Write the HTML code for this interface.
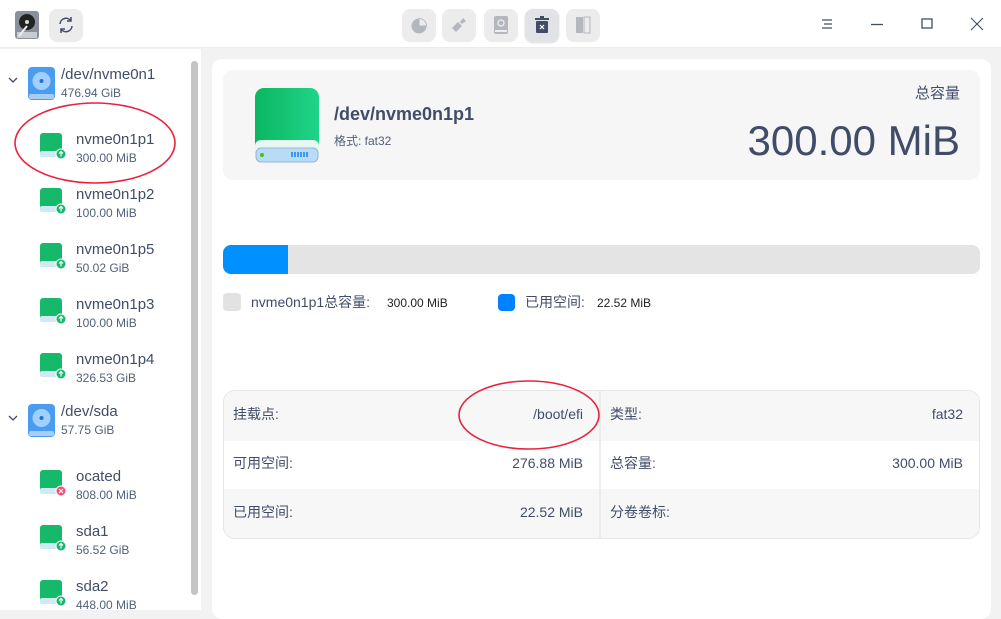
<!DOCTYPE html>
<html><head><meta charset="utf-8"><style>
*{margin:0;padding:0;box-sizing:border-box}
body{width:1001px;height:610px;overflow:hidden;background:#f2f2f2;font-family:"Liberation Sans","Noto Sans CJK SC",sans-serif;color:#414d68;position:relative;line-height:1.2}
.abs{position:absolute}
.top{left:0;top:0;width:1001px;height:48px;background:#fff;border-bottom:1px solid #ececec}
.tb{position:absolute;top:9px;width:34px;height:33px;border-radius:8px;background:#ececec}
.side{left:0;top:49px;width:201px;height:561px;background:#fff}
.sb{left:191px;top:61px;width:7px;height:534px;border-radius:4px;background:#c4c4c4}
.main{left:212px;top:59px;width:779px;height:560px;background:#fff;border-radius:10px}
.n{font-size:15px;color:#414d68;line-height:18px}
.s{font-size:12px;color:#526079;line-height:14px}
.card{left:223px;top:70px;width:757px;height:110px;background:#f6f6f6;border-radius:10px}
.tbl{left:223px;top:390px;width:757px;height:149px;border:1px solid #e6e6e6;border-radius:12px;overflow:hidden;background:#fff}
.row{position:absolute;left:0;width:757px;height:50px;font-size:14px}
.row span{position:absolute;top:14px;line-height:18px}
</style></head><body>
<div class="abs top"></div>
<svg class="abs" style="left:14px;top:10px" width="26" height="30" viewBox="0 0 26 30"><rect x="1" y="1" width="24" height="28" rx="3" fill="#8a9099"/><circle cx="13" cy="12" r="8" fill="#222"/><circle cx="13" cy="12" r="2" fill="#ddd"/><rect x="3" y="22" width="20" height="6" fill="#c8ccd2"/><path d="M5 26 L13 16" stroke="#eee" stroke-width="2"/></svg>
<div class="tb" style="left:49px"></div>
<svg class="abs" style="left:56px;top:15px" width="20" height="20" viewBox="0 0 20 20" fill="none" stroke="#414d68" stroke-width="1.5"><path d="M4 9a6 6 0 0 1 11-3M16 11a6 6 0 0 1-11 3"/><path d="M15 2v4h-4M5 18v-4h4"/></svg>
<div class="tb" style="left:402px"></div>
<svg class="abs" style="left:410px;top:17px" width="18" height="18"><circle cx="9" cy="9" r="7.5" fill="#b3b7be"/><path d="M9 1.5V9h7.5A7.5 7.5 0 0 0 9 1.5z" fill="#ececec" stroke="#b3b7be"/></svg>
<div class="tb" style="left:442px"></div>
<svg class="abs" style="left:450px;top:16px" width="18" height="18"><path d="M2 12l6-6 4 4-6 6z" fill="#b3b7be"/><path d="M10 6l3-4 3 3-4 3z" fill="#b3b7be"/></svg>
<div class="tb" style="left:484px"></div>
<svg class="abs" style="left:493px;top:15px" width="16" height="20"><rect x="1" y="1" width="14" height="18" rx="2" fill="#b3b7be"/><circle cx="8" cy="8" r="3" fill="none" stroke="#eee" stroke-width="1.3"/><rect x="2" y="15" width="12" height="2" fill="#eee"/></svg>
<div class="tb" style="left:525px;background:#e2e3e6;box-shadow:0 1px 2px rgba(0,0,0,.15)"></div>
<svg class="abs" style="left:534px;top:15px" width="16" height="20"><rect x="1" y="3" width="14" height="2" fill="#414d68"/><rect x="6" y="1" width="4" height="3" fill="#414d68"/><rect x="2" y="6" width="12" height="12" rx="1" fill="#414d68"/><path d="M6 10l4 4M10 10l-4 4" stroke="#fff" stroke-width="1.2"/></svg>
<div class="tb" style="left:566px"></div>
<svg class="abs" style="left:575px;top:15px" width="16" height="20"><rect x="1" y="2" width="7" height="16" fill="#b3b7be"/><rect x="9" y="2" width="6" height="16" fill="none" stroke="#b3b7be"/></svg>
<svg class="abs" style="left:820px;top:17px" width="14" height="14" stroke="#414d68" stroke-width="1.2"><path d="M2 3h10M4 7h8M2 11h10"/></svg>
<svg class="abs" style="left:870px;top:17px" width="14" height="14" stroke="#414d68" stroke-width="1.3"><path d="M1 7.5h12"/></svg>
<svg class="abs" style="left:921px;top:18px" width="12" height="12" stroke="#414d68" stroke-width="1.3" fill="none"><rect x="1" y="1" width="10" height="9"/></svg>
<svg class="abs" style="left:970px;top:17px" width="14" height="14" stroke="#414d68" stroke-width="1.1"><path d="M1 1l12 12M13 1L1 13"/></svg>

<div class="abs side"></div>
<div class="abs sb"></div>
<div class="abs main"></div>

<svg class="abs" style="left:8px;top:76px" width="10" height="8" stroke="#414d68" stroke-width="1.3" fill="none"><path d="M1 2l4 4 4-4"/></svg>
<svg class="abs" style="left:28px;top:67px" width="27" height="33"><rect x="0" y="0" width="27" height="33" rx="4" fill="#4a9cf0"/><circle cx="13.5" cy="14" r="9" fill="#9fd0ff"/><circle cx="13.5" cy="14" r="2" fill="#2770c4"/><rect x="1" y="27" width="25" height="5" rx="2" fill="#aaccf3"/></svg>
<div class="abs n" style="left:61px;top:66px">/dev/nvme0n1</div>
<div class="abs s" style="left:61px;top:86px">476.94 GiB</div>
<svg class="abs" style="left:8px;top:414px" width="10" height="8" stroke="#414d68" stroke-width="1.3" fill="none"><path d="M1 2l4 4 4-4"/></svg>
<svg class="abs" style="left:28px;top:404px" width="27" height="33"><rect x="0" y="0" width="27" height="33" rx="4" fill="#4a9cf0"/><circle cx="13.5" cy="14" r="9" fill="#9fd0ff"/><circle cx="13.5" cy="14" r="2" fill="#2770c4"/><rect x="1" y="27" width="25" height="5" rx="2" fill="#aaccf3"/></svg>
<div class="abs n" style="left:61px;top:403px">/dev/sda</div>
<div class="abs s" style="left:61px;top:423px">57.75 GiB</div>

<svg width="0" height="0" style="position:absolute"><defs>
<g id="pg"><rect x="0" y="0" width="22" height="24" rx="3" fill="#16b86a"/><rect x="0" y="18" width="22" height="6" rx="2" fill="#cfe9f5"/></g>
</defs></svg>
<svg class="abs" style="left:40px;top:133px" width="27" height="28"><use href="#pg"/><circle cx="21" cy="21" r="5" fill="#16b86a" stroke="#fff"/><path d="M21 18.5v5M19 20.5l2-2 2 2" stroke="#fff" stroke-width="1.2" fill="none"/></svg>
<div class="abs n" style="left:76px;top:131px">nvme0n1p1</div><div class="abs s" style="left:76px;top:151px">300.00 MiB</div>
<svg class="abs" style="left:40px;top:188px" width="27" height="28"><use href="#pg"/><circle cx="21" cy="21" r="5" fill="#16b86a" stroke="#fff"/><path d="M21 18.5v5M19 20.5l2-2 2 2" stroke="#fff" stroke-width="1.2" fill="none"/></svg>
<div class="abs n" style="left:76px;top:186px">nvme0n1p2</div><div class="abs s" style="left:76px;top:206px">100.00 MiB</div>
<svg class="abs" style="left:40px;top:243px" width="27" height="28"><use href="#pg"/><circle cx="21" cy="21" r="5" fill="#16b86a" stroke="#fff"/><path d="M21 18.5v5M19 20.5l2-2 2 2" stroke="#fff" stroke-width="1.2" fill="none"/></svg>
<div class="abs n" style="left:76px;top:241px">nvme0n1p5</div><div class="abs s" style="left:76px;top:261px">50.02 GiB</div>
<svg class="abs" style="left:40px;top:298px" width="27" height="28"><use href="#pg"/><circle cx="21" cy="21" r="5" fill="#16b86a" stroke="#fff"/><path d="M21 18.5v5M19 20.5l2-2 2 2" stroke="#fff" stroke-width="1.2" fill="none"/></svg>
<div class="abs n" style="left:76px;top:296px">nvme0n1p3</div><div class="abs s" style="left:76px;top:316px">100.00 MiB</div>
<svg class="abs" style="left:40px;top:353px" width="27" height="28"><use href="#pg"/><circle cx="21" cy="21" r="5" fill="#16b86a" stroke="#fff"/><path d="M21 18.5v5M19 20.5l2-2 2 2" stroke="#fff" stroke-width="1.2" fill="none"/></svg>
<div class="abs n" style="left:76px;top:351px">nvme0n1p4</div><div class="abs s" style="left:76px;top:371px">326.53 GiB</div>
<svg class="abs" style="left:40px;top:470px" width="27" height="28"><use href="#pg"/><circle cx="21" cy="21" r="5" fill="#f0506e" stroke="#fff"/><path d="M19 19l4 4M23 19l-4 4" stroke="#fff" stroke-width="1.2"/></svg>
<div class="abs n" style="left:76px;top:468px">ocated</div><div class="abs s" style="left:76px;top:488px">808.00 MiB</div>
<svg class="abs" style="left:40px;top:525px" width="27" height="28"><use href="#pg"/><circle cx="21" cy="21" r="5" fill="#16b86a" stroke="#fff"/><path d="M21 18.5v5M19 20.5l2-2 2 2" stroke="#fff" stroke-width="1.2" fill="none"/></svg>
<div class="abs n" style="left:76px;top:523px">sda1</div><div class="abs s" style="left:76px;top:543px">56.52 GiB</div>
<svg class="abs" style="left:40px;top:580px" width="27" height="28"><use href="#pg"/><circle cx="21" cy="21" r="5" fill="#16b86a" stroke="#fff"/><path d="M21 18.5v5M19 20.5l2-2 2 2" stroke="#fff" stroke-width="1.2" fill="none"/></svg>
<div class="abs n" style="left:76px;top:578px">sda2</div><div class="abs s" style="left:76px;top:598px">448.00 MiB</div>
<svg class="abs" style="left:14px;top:102px" width="162" height="82"><ellipse cx="81" cy="41" rx="80" ry="40" fill="none" stroke="#e8233f" stroke-width="1.6"/></svg>

<div class="abs card"></div>
<svg class="abs" style="left:254px;top:88px" width="66" height="76"><defs><linearGradient id="gg" x1="0" x2="1"><stop offset="0" stop-color="#0bb660"/><stop offset="1" stop-color="#1fd488"/></linearGradient></defs><rect x="1" y="0" width="64" height="70" rx="9" fill="url(#gg)"/><rect x="1" y="52" width="64" height="22" rx="6" fill="#e8f7f1"/><rect x="2" y="60" width="62" height="14" rx="5" fill="#b8dcf5" stroke="#9bb3d6"/><circle cx="8" cy="67" r="2" fill="#4bc20e"/><path d="M38 64v5M41 64v5M44 64v5M47 64v5M50 64v5M53 64v5" stroke="#1580f0" stroke-width="1.5"/></svg>
<div class="abs" style="left:334px;top:103px;font-size:18px;line-height:22px;font-weight:bold;color:#414d68">/dev/nvme0n1p1</div>
<div class="abs" style="left:334px;top:134px;font-size:12px;line-height:15px;color:#526079">格式: fat32</div>
<div class="abs" style="left:880px;top:84px;font-size:15px;line-height:20px;color:#414d68;width:80px;text-align:right">总容量</div>
<div class="abs" style="left:660px;top:116px;font-size:42px;line-height:50px;color:#414d68;width:300px;text-align:right">300.00 MiB</div>

<div class="abs" style="left:223px;top:245px;width:757px;height:29px;border-radius:8px;background:#e4e4e4;overflow:hidden"><div style="width:65px;height:29px;background:#0090ff"></div></div>
<div class="abs" style="left:223px;top:293px;width:18px;height:18px;border-radius:4px;background:#e2e2e2"></div>
<div class="abs" style="left:251px;top:293px;font-size:14px;line-height:18px">nvme0n1p1总容量:</div>
<div class="abs" style="left:387px;top:296px;font-size:12px;line-height:14px;color:#222">300.00 MiB</div>
<div class="abs" style="left:498px;top:294px;width:17px;height:17px;border-radius:4px;background:#0081ff"></div>
<div class="abs" style="left:525px;top:293px;font-size:14px;line-height:18px">已用空间:</div>
<div class="abs" style="left:597px;top:296px;font-size:12px;line-height:14px;color:#222">22.52 MiB</div>

<div class="abs tbl">
<div class="row" style="top:0;background:#f7f7f7"><span style="left:9px">挂载点:</span><span style="right:398px">/boot/efi</span><span style="left:386px">类型:</span><span style="right:18px">fat32</span></div>
<div class="row" style="top:49px"><span style="left:9px">可用空间:</span><span style="right:398px">276.88 MiB</span><span style="left:386px">总容量:</span><span style="right:18px">300.00 MiB</span></div>
<div class="row" style="top:98px;background:#f7f7f7"><span style="left:9px">已用空间:</span><span style="right:398px">22.52 MiB</span><span style="left:386px">分卷卷标:</span></div>
<div style="position:absolute;left:375px;top:0;width:2px;height:149px;background:#ececec"></div>
</div>
<svg class="abs" style="left:457px;top:379px" width="144" height="72"><ellipse cx="72" cy="36" rx="70" ry="34" fill="none" stroke="#e8233f" stroke-width="1.6"/></svg>
</body></html>
